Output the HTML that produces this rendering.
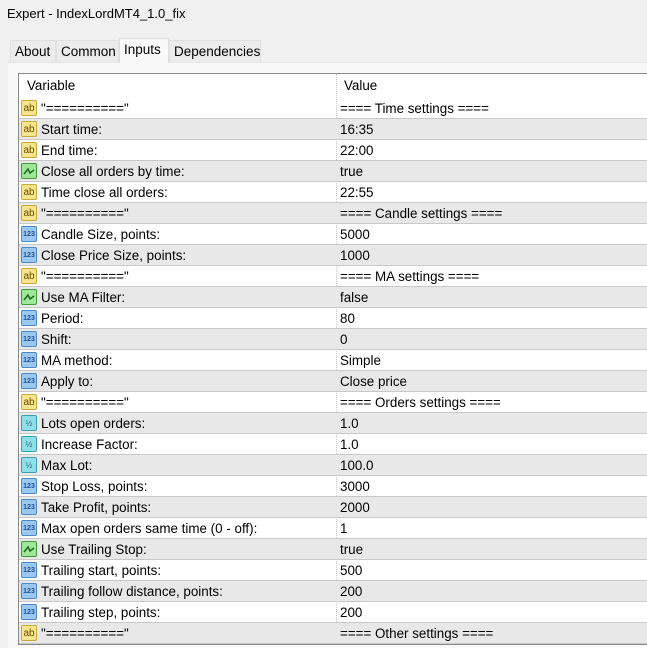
<!DOCTYPE html>
<html><head><meta charset="utf-8"><style>
*{margin:0;padding:0;box-sizing:border-box}
body{width:647px;height:648px;overflow:hidden;background:#f0f0f0;font-family:"Liberation Sans","Noto Sans CJK SC",sans-serif;font-size:13.4px;color:#000;position:relative}
.title{position:absolute;left:7px;top:6px;font-size:13px}
.tab{position:absolute;top:40px;height:22px;background:#ececec;border:1px solid #e0e0e0;border-bottom:none;padding:3px 0 0 4px;font-size:13.5px}
.tab.sel{top:38px;height:25px;background:#f9f9f9;z-index:2;padding-top:3px}
.page{position:absolute;left:8px;top:62px;right:0;bottom:0;background:#f9f9f9;border-top:1px solid #e4e4e4}
.grid{position:absolute;left:18px;top:73px;width:640px;height:572px;background:#fff;border:1px solid #8a8a8a;border-right:none}
.hdr{height:24px;position:relative}
.hdr span{position:absolute;top:4px}
.row{height:21px;position:relative;border-bottom:1px solid #c8c8c8}
.row.g{background:#e8e8e8}
.row .n{position:absolute;left:22px;top:3px;white-space:nowrap}
.row .v{position:absolute;left:321px;top:3px;white-space:nowrap}
.div{position:absolute;left:317px;top:0;bottom:0;border-left:1px dotted #c8c8c8}
.ic{position:absolute;left:2px;top:2px;width:16px;height:16px;border-radius:2px;font-size:8px;font-weight:bold;text-align:center;line-height:15px;font-style:normal}
.ab{background:#f6e58a;border:1px solid #c9a93a;color:#6b4a00;font-size:10px;font-weight:normal}
.nm{background:#9cc8f0;border:1px solid #4a8ac8;color:#1a4f9a;font-size:7px}
.bo{background:#9fe69a;border:1px solid #3f9a3a}
.fl{background:#8fdfe8;border:1px solid #3aa0b0;color:#1a6080;font-size:8px;font-weight:normal}
</style></head><body>
<div class="title">Expert - IndexLordMT4_1.0_fix</div>
<div class="page"></div>
<div class="tab" style="left:10px;width:46px">About</div>
<div class="tab" style="left:56px;width:63px">Common</div>
<div class="tab sel" style="left:119px;width:50px">Inputs</div>
<div class="tab" style="left:169px;width:92px">Dependencies</div>
<div class="grid">
<div class="div"></div>
<div class="hdr"><span style="left:8px">Variable</span><span style="left:325px">Value</span></div>
<div class="row"><i class="ic ab">ab</i><span class="n">"=========="</span><span class="v">==== Time settings ====</span></div>
<div class="row g"><i class="ic ab">ab</i><span class="n">Start time:</span><span class="v">16:35</span></div>
<div class="row"><i class="ic ab">ab</i><span class="n">End time:</span><span class="v">22:00</span></div>
<div class="row g"><i class="ic bo"><svg width="14" height="14"><path d="M2 10 L6 5 L8 9 L12 6" stroke="#1a6a1a" stroke-width="1.5" fill="none"/></svg></i><span class="n">Close all orders by time:</span><span class="v">true</span></div>
<div class="row"><i class="ic ab">ab</i><span class="n">Time close all orders:</span><span class="v">22:55</span></div>
<div class="row g"><i class="ic ab">ab</i><span class="n">"=========="</span><span class="v">==== Candle settings ====</span></div>
<div class="row"><i class="ic nm">123</i><span class="n">Candle Size, points:</span><span class="v">5000</span></div>
<div class="row g"><i class="ic nm">123</i><span class="n">Close Price Size, points:</span><span class="v">1000</span></div>
<div class="row"><i class="ic ab">ab</i><span class="n">"=========="</span><span class="v">==== MA settings ====</span></div>
<div class="row g"><i class="ic bo"><svg width="14" height="14"><path d="M2 10 L6 5 L8 9 L12 6" stroke="#1a6a1a" stroke-width="1.5" fill="none"/></svg></i><span class="n">Use MA Filter:</span><span class="v">false</span></div>
<div class="row"><i class="ic nm">123</i><span class="n">Period:</span><span class="v">80</span></div>
<div class="row g"><i class="ic nm">123</i><span class="n">Shift:</span><span class="v">0</span></div>
<div class="row"><i class="ic nm">123</i><span class="n">MA method:</span><span class="v">Simple</span></div>
<div class="row g"><i class="ic nm">123</i><span class="n">Apply to:</span><span class="v">Close price</span></div>
<div class="row"><i class="ic ab">ab</i><span class="n">"=========="</span><span class="v">==== Orders settings ====</span></div>
<div class="row g"><i class="ic fl">½</i><span class="n">Lots open orders:</span><span class="v">1.0</span></div>
<div class="row"><i class="ic fl">½</i><span class="n">Increase Factor:</span><span class="v">1.0</span></div>
<div class="row g"><i class="ic fl">½</i><span class="n">Max Lot:</span><span class="v">100.0</span></div>
<div class="row"><i class="ic nm">123</i><span class="n">Stop Loss, points:</span><span class="v">3000</span></div>
<div class="row g"><i class="ic nm">123</i><span class="n">Take Profit, points:</span><span class="v">2000</span></div>
<div class="row"><i class="ic nm">123</i><span class="n">Max open orders same time (0 - off):</span><span class="v">1</span></div>
<div class="row g"><i class="ic bo"><svg width="14" height="14"><path d="M2 10 L6 5 L8 9 L12 6" stroke="#1a6a1a" stroke-width="1.5" fill="none"/></svg></i><span class="n">Use Trailing Stop:</span><span class="v">true</span></div>
<div class="row"><i class="ic nm">123</i><span class="n">Trailing start, points:</span><span class="v">500</span></div>
<div class="row g"><i class="ic nm">123</i><span class="n">Trailing follow distance, points:</span><span class="v">200</span></div>
<div class="row"><i class="ic nm">123</i><span class="n">Trailing step, points:</span><span class="v">200</span></div>
<div class="row g"><i class="ic ab">ab</i><span class="n">"=========="</span><span class="v">==== Other settings ====</span></div>
</div>
</body></html>
